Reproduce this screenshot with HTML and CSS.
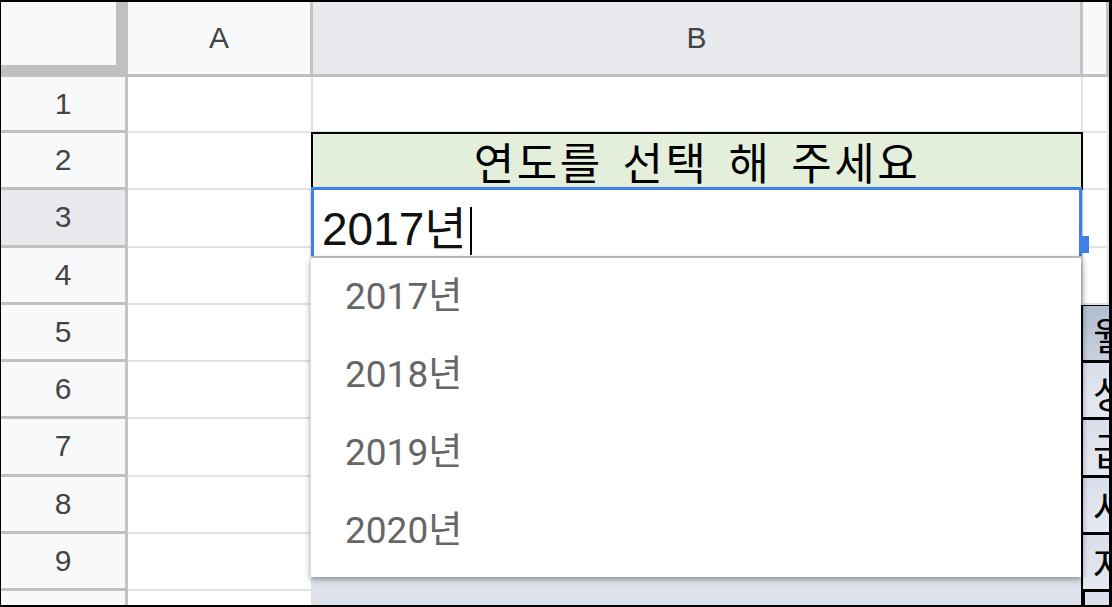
FILE: index.html
```html
<!DOCTYPE html>
<html lang="ko">
<head>
<meta charset="utf-8">
<title>Sheet</title>
<link rel="stylesheet" href="styles.css">
</head>
<body>
<div class="sheet">
  <div class="corner"></div>
  <div class="colhead">A</div>
  <div class="colhead sel">B</div>
  <div class="colhead"></div>

  <div class="rowhead">1</div><div class="cell"></div><div class="cell"></div><div class="cell"></div>

  <div class="rowhead">2</div><div class="cell"></div><div class="cell title">연도를 선택 해 주세요</div><div class="cell"></div>

  <div class="rowhead sel">3</div><div class="cell"></div>
  <div class="cell editing">
    <div class="editor">2017년<span class="caret"></span><span class="handle"></span>
      <div class="dropdown">
        <div class="opt">2017년</div>
        <div class="opt">2018년</div>
        <div class="opt">2019년</div>
        <div class="opt">2020년</div>
      </div>
    </div>
  </div>
  <div class="cell"></div>

  <div class="rowhead">4</div><div class="cell"></div><div class="cell"></div><div class="cell"></div>

  <div class="rowhead">5</div><div class="cell"></div><div class="tbl"></div><div class="tc dark">월</div>
  <div class="rowhead">6</div><div class="cell"></div><div class="tbl"></div><div class="tc">상</div>
  <div class="rowhead">7</div><div class="cell"></div><div class="tbl"></div><div class="tc">급</div>
  <div class="rowhead">8</div><div class="cell"></div><div class="tbl"></div><div class="tc">사</div>
  <div class="rowhead">9</div><div class="cell"></div><div class="tbl"></div><div class="tc">자</div>
  <div class="rowhead">10</div><div class="cell"></div><div class="tbl"></div><div class="tc last"></div>
</div>
</body>
</html>
```

FILE: styles.css
```css
* { box-sizing: border-box; }

html, body {
  margin: 0;
  height: 607px;
}

body {
  background: #000;
  padding: 2px 3px 2px 1px;
  overflow: hidden;
  font-family: "Liberation Sans", "Noto Sans CJK KR", sans-serif;
}

.sheet {
  display: grid;
  grid-template-columns: 127px 185px 770px 26px;
  grid-template-rows: 75px 56px repeat(9, 57.25px);
  height: 603px;
  overflow: hidden;
  background: #fff;
}

.corner {
  background: #f8f9fa;
  border-right: 12px solid #c0c0c0;
  border-bottom: 12px solid #c0c0c0;
}

.colhead,
.rowhead {
  background: #f8f9fa;
  border-right: 3px solid #c4c4c4;
  border-bottom: 3px solid #c0c0c0;
  display: flex;
  align-items: center;
  justify-content: center;
  font-size: 30px;
  color: #444;
}

.colhead.sel,
.rowhead.sel {
  background: #e8eaed;
}

.cell {
  position: relative;
  border-right: 2px solid #e2e2e2;
  border-bottom: 2px solid #e2e2e2;
}

.title {
  background: #e3efda;
  border: 2px solid #000;
  margin: -1px 0 0 -2px;
  display: flex;
  align-items: center;
  justify-content: center;
  font-family: "Noto Sans CJK KR", sans-serif;
  font-size: 44px;
  letter-spacing: 2.5px;
  word-spacing: 5px;
  color: #000;
  white-space: nowrap;
}

.editor {
  position: absolute;
  top: -3px;
  left: -2px;
  right: -1px;
  height: 69px;
  border: 3px solid #3f7fe8;
  border-bottom: none;
  background: #fff;
  z-index: 10;
  box-shadow: 0 2px 3px rgba(0, 0, 0, 0.3);
  font-size: 46px;
  line-height: 52px;
  padding: 13px 0 0 8px;
  white-space: nowrap;
  color: #111;
}

.caret {
  display: inline-block;
  width: 2px;
  height: 48px;
  margin-left: 3px;
  background: #000;
  vertical-align: -10px;
}

.handle {
  position: absolute;
  right: -10px;
  bottom: 3px;
  width: 10px;
  height: 17px;
  background: #3f7fe8;
}

.dropdown {
  position: absolute;
  top: calc(100% + 2px);
  left: -4px;
  right: -2px;
  height: 319px;
  background: #fff;
  border-left: 1px solid #dcdcdc;
  box-shadow: 0 3px 6px rgba(0, 0, 0, 0.3), 3px 0 5px rgba(0, 0, 0, 0.15);
  padding-bottom: 7px;
}

.opt {
  height: 78px;
  line-height: 78px;
  overflow: hidden;
  padding-left: 34px;
  font-family: Roboto, "Noto Sans CJK KR", sans-serif;
  font-size: 37px;
  color: #666;
}

.tbl {
  background: #dde3ed;
  border-left: 2px solid #000;
  border-right: 2px solid #000;
  margin-left: -2px;
}

.tc {
  margin-top: -2px;
  border-top: 3px solid #000;
  background: linear-gradient(#d9dfea, #e5e9f1);
  padding-left: 10px;
  display: flex;
  align-items: center;
  overflow: hidden;
  white-space: nowrap;
  font-family: "Noto Sans CJK KR", sans-serif;
  font-size: 38px;
  color: #000;
}

.tc.dark {
  background: linear-gradient(#b2bdd0, #c9d1df);
}

.tc.last {
  border-left: 2px solid #000;
}
```
